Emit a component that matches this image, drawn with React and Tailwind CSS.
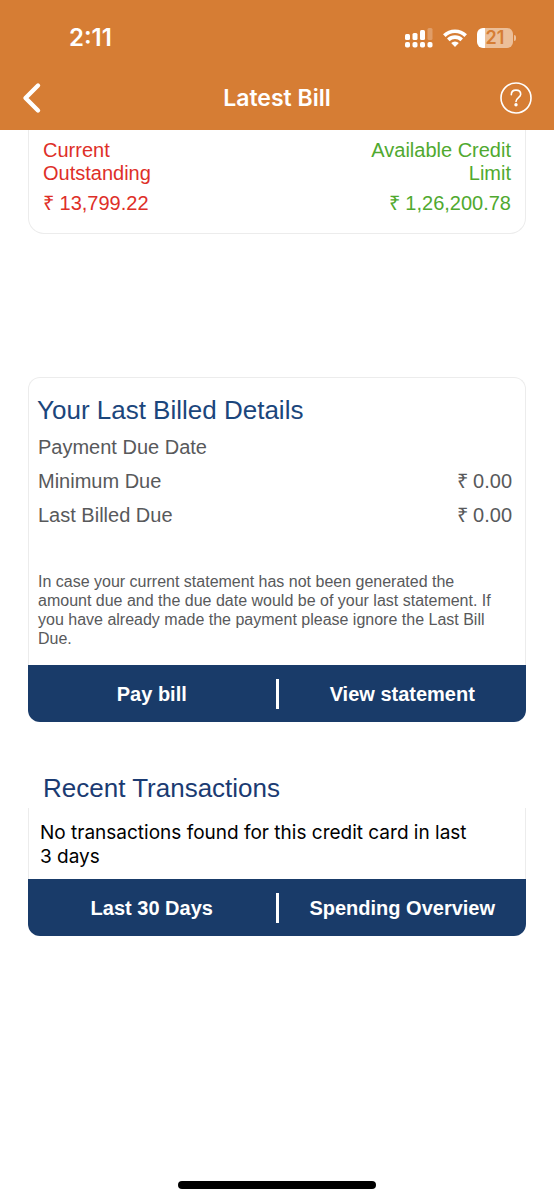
import { useState } from "react";

// Rows shown in the "last billed" card
const billRows = [
    { label: "Payment Due Date", value: "" },
    { label: "Minimum Due", value: "₹ 0.00" },
    { label: "Last Billed Due", value: "₹ 0.00" },
];

function StatusBar() {
    return (
        <div className="flex h-[75px] items-center justify-between pr-[38px] pl-[69px] font-['Inter',sans-serif] text-white">
            <span className="text-2xl leading-7 font-semibold">2:11</span>
            <div className="flex items-center gap-[10px]">
                <svg className="h-5 w-7" viewBox="0 0 28 20" fill="currentColor" aria-hidden="true">
                    <rect x="0" y="6" width="5" height="6" rx="1.5" />
                    <rect x="7.5" y="5" width="5" height="7" rx="1.5" />
                    <rect x="15" y="2" width="5" height="10" rx="1.5" />
                    <rect x="22.5" y="0" width="5" height="12" rx="1.5" opacity="0.25" />
                    <rect x="0" y="14" width="5" height="5.5" rx="1.8" />
                    <rect x="7.5" y="14" width="5" height="5.5" rx="1.8" />
                    <rect x="15" y="14" width="5" height="5.5" rx="1.8" />
                    <rect x="22.5" y="14" width="5" height="5.5" rx="1.8" />
                </svg>
                <svg className="h-[18px] w-6" viewBox="0 0 24 18" fill="none" stroke="currentColor" strokeWidth="3.6" aria-hidden="true">
                    <path d="M1.3 6.6a15.2 15.2 0 0 1 21.4 0" />
                    <path d="M5.3 10.9a9.5 9.5 0 0 1 13.4 0" />
                    <path d="M8.2 14a5.4 5.4 0 0 1 7.6 0L12 18z" fill="currentColor" stroke="none" />
                </svg>
                <div className="flex items-center gap-px">
                    <div className="flex h-5 w-[36px] items-center justify-center rounded-md bg-linear-to-r from-white from-22% to-[#ecbf99] to-22%">
                        <span className="text-lg leading-5 font-semibold text-[#d67d34]">21</span>
                    </div>
                    <div className="h-[6px] w-[2px] rounded-r-full bg-[#ecbf99]" />
                </div>
            </div>
        </div>
    );
}

function ActionBar({ left, right }) {
    return (
        <div className="grid h-[57px] grid-cols-[1fr_3px_1fr] items-center rounded-b-xl bg-[#193b69] text-xl font-bold text-white">
            <button type="button" className="h-full">{left}</button>
            <span className="h-[30px] bg-white" />
            <button type="button" className="h-full">{right}</button>
        </div>
    );
}

export default function App() {
    const [bill] = useState(billRows);

    return (
        <div className="flex min-h-screen flex-col bg-white font-['Liberation_Sans',sans-serif]">
            <header className="bg-[#d67d34] text-white">
                <StatusBar />
                <div className="grid h-[55px] grid-cols-[1fr_auto_1fr] items-center px-[22px] pb-[9px]">
                    <button type="button" aria-label="Back" className="justify-self-start">
                        <svg className="h-8 w-5" viewBox="0 0 20 32" fill="none" stroke="currentColor" strokeWidth="4.4" strokeLinecap="round" strokeLinejoin="round">
                            <path d="M16 3.500 3.500 16 16 28.500" />
                        </svg>
                    </button>
                    <h1 className="font-['Inter',sans-serif] text-[23px] leading-7 font-semibold">Latest Bill</h1>
                    <button type="button" aria-label="Help" className="justify-self-end">
                        <svg className="h-8 w-8" viewBox="0 0 32 32" fill="none" stroke="currentColor" strokeWidth="1.6" strokeLinecap="round">
                            <circle cx="16" cy="16" r="15" />
                            <path d="M11.3 12.7c0-2.9 2-4.6 4.7-4.6s4.7 1.7 4.7 4.2c0 3.2-4.7 3.4-4.7 7.2" />
                            <circle cx="16" cy="22.8" r="1.7" fill="currentColor" stroke="none" />
                        </svg>
                    </button>
                </div>
            </header>

            <main className="flex-1 px-7">
                <section className="flex justify-between rounded-b-2xl border border-t-0 border-[#ececec] px-[14px] pt-[9px] pb-[18px] text-xl leading-[23px]">
                    <div className="w-40 text-[#de2f28]">
                        <p>Current Outstanding</p>
                        <p className="mt-[7px]">₹ 13,799.22</p>
                    </div>
                    <div className="w-40 text-right text-[#50a92f]">
                        <p>Available Credit Limit</p>
                        <p className="mt-[7px]">₹ 1,26,200.78</p>
                    </div>
                </section>

                <section className="mt-[143px]">
                    <div className="rounded-t-xl border border-b-0 border-[#ececec] px-2 pt-4 pb-[17px] text-[#58595b]">
                        <h2 className="text-[26px] leading-8 text-[#1b467c]">Your Last Billed Details</h2>
                        <dl className="px-px pt-1 text-xl leading-[34px]">
                            {bill.map((row) => (
                                <div key={row.label} className="flex h-[34px] justify-between pr-1">
                                    <dt>{row.label}</dt>
                                    <dd>{row.value}</dd>
                                </div>
                            ))}
                        </dl>
                        <p className="mt-10 pr-2 pl-px text-base leading-[19px]">
                            In case your current statement has not been generated the amount due and the due date would be of your last statement. If you have already made the payment please ignore the Last Bill Due.
                        </p>
                    </div>
                    <ActionBar left="Pay bill" right="View statement" />
                </section>

                <section className="mt-[50px]">
                    <h2 className="px-[15px] text-[26px] leading-8 text-[#1b3b72]">Recent Transactions</h2>
                    <div className="mt-1 border-x border-[#ececec] px-[11px] pt-[13px] pb-[10px]">
                        <p className="pr-8 font-['Inter',sans-serif] text-[19px] leading-6 text-black">
                            No transactions found for this credit card in last 3 days
                        </p>
                    </div>
                    <ActionBar left="Last 30 Days" right="Spending Overview" />
                </section>
            </main>

            <div className="mx-auto mb-[11px] h-2 w-[198px] rounded-full bg-black" />
        </div>
    );
}
